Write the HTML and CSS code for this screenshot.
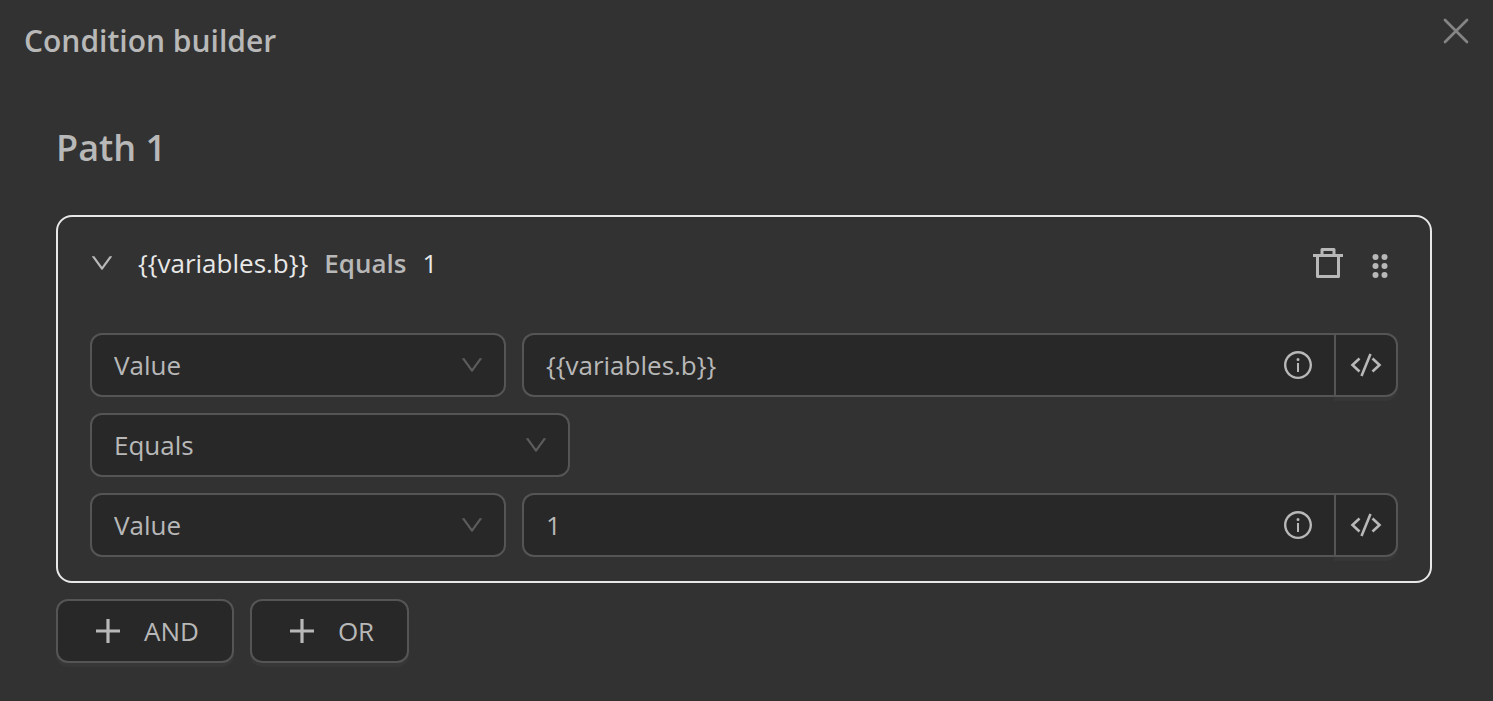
FILE: index.html
```html
<!DOCTYPE html>
<html lang="en">
<head>
<meta charset="utf-8">
<title>Condition builder</title>
<link rel="stylesheet" href="styles.css">
</head>
<body>
<svg class="sprite" aria-hidden="true">
  <symbol id="down" viewBox="64 64 896 896"><path d="M884 256h-75c-5.100 0-9.900 2.500-12.900 6.600L512 654.200 227.900 262.600c-3-4.100-7.800-6.600-12.900-6.600h-75c-6.500 0-10.300 7.400-6.500 12.700l352.600 486.100c12.800 17.600 39 17.600 51.700 0l352.600-486.100c3.900-5.300.1-12.700-6.400-12.700z"/></symbol>
  <symbol id="info" viewBox="64 64 896 896"><path d="M512 64C264.600 64 64 264.600 64 512s200.600 448 448 448 448-200.600 448-448S759.400 64 512 64zm0 820c-205.400 0-372-166.600-372-372s166.600-372 372-372 372 166.600 372 372-166.600 372-372 372z"/><path d="M464 336a48 48 0 1 0 96 0 48 48 0 1 0-96 0zm72 112h-48c-4.400 0-8 3.600-8 8v272c0 4.400 3.600 8 8 8h48c4.400 0 8-3.600 8-8V456c0-4.400-3.600-8-8-8z"/></symbol>
  <symbol id="code" viewBox="0 0 32 32"><path d="M9.500 9.500 2.500 16l7 6.500M22.500 9.500l7 6.500-7 6.500M20.500 5l-9 22" fill="none" stroke="currentColor" stroke-width="2.600"/></symbol>
  <symbol id="plus" viewBox="0 0 24 24"><path d="M12 0v24M0 12h24" fill="none" stroke="currentColor" stroke-width="3.200"/></symbol>
</svg>
<main class="dialog">
  <header class="dialog-header">
    <h1 class="dialog-title">Condition builder</h1>
    <button class="icon-button close" type="button" aria-label="Close">
      <svg width="26" height="26" viewBox="0 0 26 26"><path d="M2 2l22 22M24 2 2 24" fill="none" stroke="currentColor" stroke-width="2.700" stroke-linecap="round"/></svg>
    </button>
  </header>
  <section class="path">
    <h2 class="path-title">Path 1</h2>
    <article class="card">
      <div class="card-header">
        <button class="icon-button" type="button" aria-label="Collapse"><svg class="icon-24"><use href="#down"/></svg></button>
        <p class="summary"><span>{{variables.b}}</span><strong>Equals</strong><span>1</span></p>
        <button class="icon-button" type="button" aria-label="Delete">
          <svg width="30" height="30" viewBox="0 0 30 30"><path d="M0 7.500h30M9 7V1.500h12V7M4.500 8v20.500h21V8" fill="none" stroke="currentColor" stroke-width="3" stroke-linejoin="round"/></svg>
        </button>
        <button class="icon-button drag" type="button" aria-label="Drag">
          <svg width="16" height="24" viewBox="0 0 16 24"><circle cx="3.500" cy="3" r="3"/><circle cx="12.500" cy="3" r="3"/><circle cx="3.500" cy="12" r="3"/><circle cx="12.500" cy="12" r="3"/><circle cx="3.500" cy="21" r="3"/><circle cx="12.500" cy="21" r="3"/></svg>
        </button>
      </div>
      <div class="rows">
        <div class="row">
          <div class="select">
            <select class="control" aria-label="Left operand type"><option>Value</option></select>
            <svg class="icon-24 arrow"><use href="#down"/></svg>
          </div>
          <div class="group">
            <div class="field">
              <input class="field-input" type="text" aria-label="Left operand" value="{{variables.b}}">
              <svg class="icon-28"><use href="#info"/></svg>
            </div>
            <button class="code-button" type="button" aria-label="Edit left expression"><svg class="icon-32"><use href="#code"/></svg></button>
          </div>
        </div>
        <div class="select wide">
          <select class="control" aria-label="Operator"><option>Equals</option></select>
          <svg class="icon-24 arrow"><use href="#down"/></svg>
        </div>
        <div class="row">
          <div class="select">
            <select class="control" aria-label="Right operand type"><option>Value</option></select>
            <svg class="icon-24 arrow"><use href="#down"/></svg>
          </div>
          <div class="group">
            <div class="field">
              <input class="field-input" type="text" aria-label="Right operand" value="1">
              <svg class="icon-28"><use href="#info"/></svg>
            </div>
            <button class="code-button" type="button" aria-label="Edit right expression"><svg class="icon-32"><use href="#code"/></svg></button>
          </div>
        </div>
      </div>
    </article>
    <div class="actions">
      <button class="add-button" type="button"><svg class="icon-24"><use href="#plus"/></svg>AND</button>
      <button class="add-button" type="button"><svg class="icon-24"><use href="#plus"/></svg>OR</button>
    </div>
  </section>
</main>
</body>
</html>
```
FILE: styles.css
```css
:root {
  --surface: #323232;
  --control: #282828;
  --border: #555555;
  --text: #b8b8b8;
  --bright: #e8e8e8;
}

* { box-sizing: border-box; }

body {
  margin: 0;
  background: var(--surface);
  color: var(--text);
  font: 26px/40px "Segoe UI", "Open Sans", "Noto Sans", sans-serif;
}

h1, h2, p { margin: 0; }

button, input, select { font: inherit; color: inherit; }

svg { display: block; flex: none; fill: currentColor; }

.sprite { position: absolute; width: 0; height: 0; }
.icon-24 { width: 24px; height: 24px; }
.icon-28 { width: 28px; height: 28px; }
.icon-32 { width: 32px; height: 32px; }

.dialog-header {
  display: flex;
  justify-content: space-between;
  align-items: flex-start;
  padding: 18px 24px 0;
}

.dialog-title { font-size: 30px; line-height: 46px; font-weight: 600; }

.icon-button { padding: 0; border: 0; background: none; }
.close { color: #858585; }

.path { padding: 56px 61px 32px 56px; }

.path-title {
  margin-bottom: 39px;
  font-size: 36px;
  line-height: 56px;
  font-weight: 600;
}

.card {
  padding: 24px 32px;
  border: 2px solid var(--bright);
  border-radius: 16px;
}

.card-header {
  display: flex;
  align-items: center;
  height: 44px;
  margin-bottom: 48px;
  padding-right: 10px;
}

.summary {
  display: flex;
  flex: 1;
  gap: 16px;
  margin-left: 24px;
  color: var(--bright);
}

.summary strong { color: var(--text); font-weight: 600; }
.drag { margin-left: 29px; padding-top: 6px; }

.rows { display: grid; gap: 16px; }
.row { display: flex; gap: 16px; }

.select {
  position: relative;
  flex: none;
  width: 416px;
  max-width: 100%;
}

.wide { width: 480px; }

.control {
  display: block;
  width: 100%;
  height: 64px;
  padding: 0 56px 0 22px;
  border: 2px solid var(--border);
  border-radius: 12px;
  background: var(--control);
  appearance: none;
}

.arrow {
  position: absolute;
  top: 20px;
  right: 22px;
  color: #5c5c5c;
  pointer-events: none;
}

.group { display: flex; flex: 1; min-width: 0; }

.field {
  display: flex;
  flex: 1;
  align-items: center;
  min-width: 0;
  height: 64px;
  padding: 0 22px;
  border: 2px solid var(--border);
  border-right: 0;
  border-radius: 12px 0 0 12px;
  background: var(--control);
}

.field-input {
  flex: 1;
  min-width: 0;
  padding: 0;
  border: 0;
  outline: 0;
  background: none;
}

.code-button {
  display: grid;
  place-items: center;
  width: 64px;
  height: 64px;
  padding: 0;
  border: 2px solid var(--border);
  border-radius: 0 12px 12px 0;
  background: var(--control);
  box-shadow: 0 4px 0 #373737;
}

.actions { display: flex; gap: 16px; margin-top: 16px; }

.add-button {
  display: flex;
  align-items: center;
  gap: 24px;
  height: 64px;
  padding: 0 33px 0 38px;
  border: 2px solid var(--border);
  border-radius: 12px;
  background: var(--control);
  box-shadow: 0 4px 0 #373737;
}
```
